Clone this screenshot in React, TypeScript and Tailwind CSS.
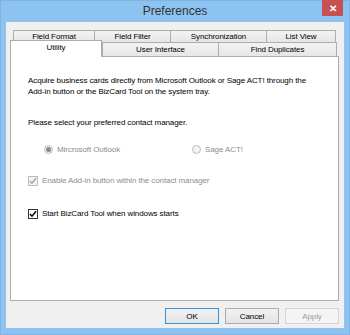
import React from 'react';

const Tab: React.FC<{ label: string; w: number; selected?: boolean; className?: string }> = ({ label, w, selected, className }) => {
  if (selected) {
    return (
      <div
        style={{ width: w }}
        className={`relative z-10 -mt-[2px] -mb-px h-[17px] bg-white border border-[#acacac] border-b-0 flex items-start justify-center pt-[1px] ${className ?? ''}`}
      >
        {label}
      </div>
    );
  }
  return (
    <div
      style={{ width: w }}
      className={`h-full bg-gradient-to-b from-[#f3f3f3] to-[#e6e6e6] border border-[#acacac] border-b-0 -ml-px first:ml-0 flex items-center justify-center ${className ?? ''}`}
    >
      {label}
    </div>
  );
};

const Radio: React.FC<{ label: string; checked?: boolean }> = ({ label, checked }) => (
  <div className="flex items-center gap-[4px] text-[#8d8d8d]">
    <span className="w-[9px] h-[9px] rounded-full border border-[#bcbcbc] bg-[#f4f4f4] flex items-center justify-center">
      {checked && <span className="w-[5px] h-[5px] rounded-full bg-[#8a8a8a]" />}
    </span>
    {label}
  </div>
);

const Check: React.FC<{ label: string; disabled?: boolean }> = ({ label, disabled }) => (
  <div className={`flex items-center gap-[4px] ${disabled ? 'text-[#8d8d8d]' : 'text-black'}`}>
    <span
      className={`w-[10px] h-[10px] border flex items-center justify-center ${
        disabled ? 'border-[#bcbcbc] bg-[#f4f4f4]' : 'border-[#333333] bg-white'
      }`}
    >
      <svg width="8" height="8" viewBox="0 0 8 8">
        <path d="M1 4 L3 6.2 L7 1.2" fill="none" stroke={disabled ? '#a8a8a8' : '#000'} strokeWidth="1.5" />
      </svg>
    </span>
    {label}
  </div>
);

const Button: React.FC<{ label: string; primary?: boolean; disabled?: boolean }> = ({ label, primary, disabled }) => (
  <div
    className={`w-[54px] h-[16px] flex items-center justify-center border ${
      disabled
        ? 'border-[#d5d5d5] bg-[#f4f4f4] text-[#a0a0a0]'
        : primary
        ? 'border-[#3c90d8] bg-gradient-to-b from-[#f2f2f2] to-[#e3e3e3] text-black'
        : 'border-[#acacac] bg-gradient-to-b from-[#f2f2f2] to-[#e3e3e3] text-black'
    }`}
  >
    {label}
  </div>
);

const App: React.FC = () => {
  return (
    <div
      className="w-[350px] h-[335px] bg-[#8dc3f1] border border-[#7fb4e4] flex flex-col text-[8px] leading-[11px] tracking-[-0.1px]"
      style={{ fontFamily: '"Liberation Sans", Arial, sans-serif' }}
    >
      <div className="relative h-[21px] flex items-center justify-center text-[12px] tracking-normal text-[#333333]">
        Preferences
        <div className="absolute right-[6px] -top-px w-[21px] h-[16px] bg-[#c75050] flex items-center justify-center text-white text-[10px] font-bold">
          ✕
        </div>
      </div>

      <div className="mx-[5px] h-[306px] bg-[#f0f0f0] flex flex-col pl-[4px] pr-[5px] pt-[8px]">
        <div className="flex flex-col">
          <div className="flex h-[12px] ml-[3px] mr-px">
            <Tab label="Field Format" w={82} />
            <Tab label="Field Filter" w={77} />
            <Tab label="Synchronization" w={97} />
            <Tab label="List View" w={70} />
          </div>
          <div className="flex h-[14px] items-end mr-px">
            <Tab label="Utility" w={92} selected />
            <div className="flex h-[14px]">
              <Tab label="User Interface" w={117} className="ml-0" />
              <Tab label="Find Duplicates" w={119} />
            </div>
          </div>
          <div className="h-[245px] bg-white border border-[#acacac] pl-[17px] pt-[18px] flex flex-col">
            <p>
              Acquire business cards directly from Microsoft Outlook or Sage ACT! through the
              <br />
              Add-in button or the BizCard Tool on the system tray.
            </p>
            <p className="mt-[20px]">Please select your preferred contact manager.</p>
            <div className="mt-[16px] flex">
              <div className="ml-[16px] w-[148px]">
                <Radio label="Mircrosoft Outlook" checked />
              </div>
              <Radio label="Sage ACT!" />
            </div>
            <div className="mt-[20px]">
              <Check label="Enable Add-in button within the contact manager" disabled />
            </div>
            <div className="mt-[22px]">
              <Check label="Start BizCard Tool when windows starts" />
            </div>
          </div>
        </div>
        <div className="mt-[7px] flex justify-end gap-[6px]">
          <Button label="OK" primary />
          <Button label="Cancel" />
          <Button label="Apply" disabled />
        </div>
      </div>
    </div>
  );
};

export default App;
